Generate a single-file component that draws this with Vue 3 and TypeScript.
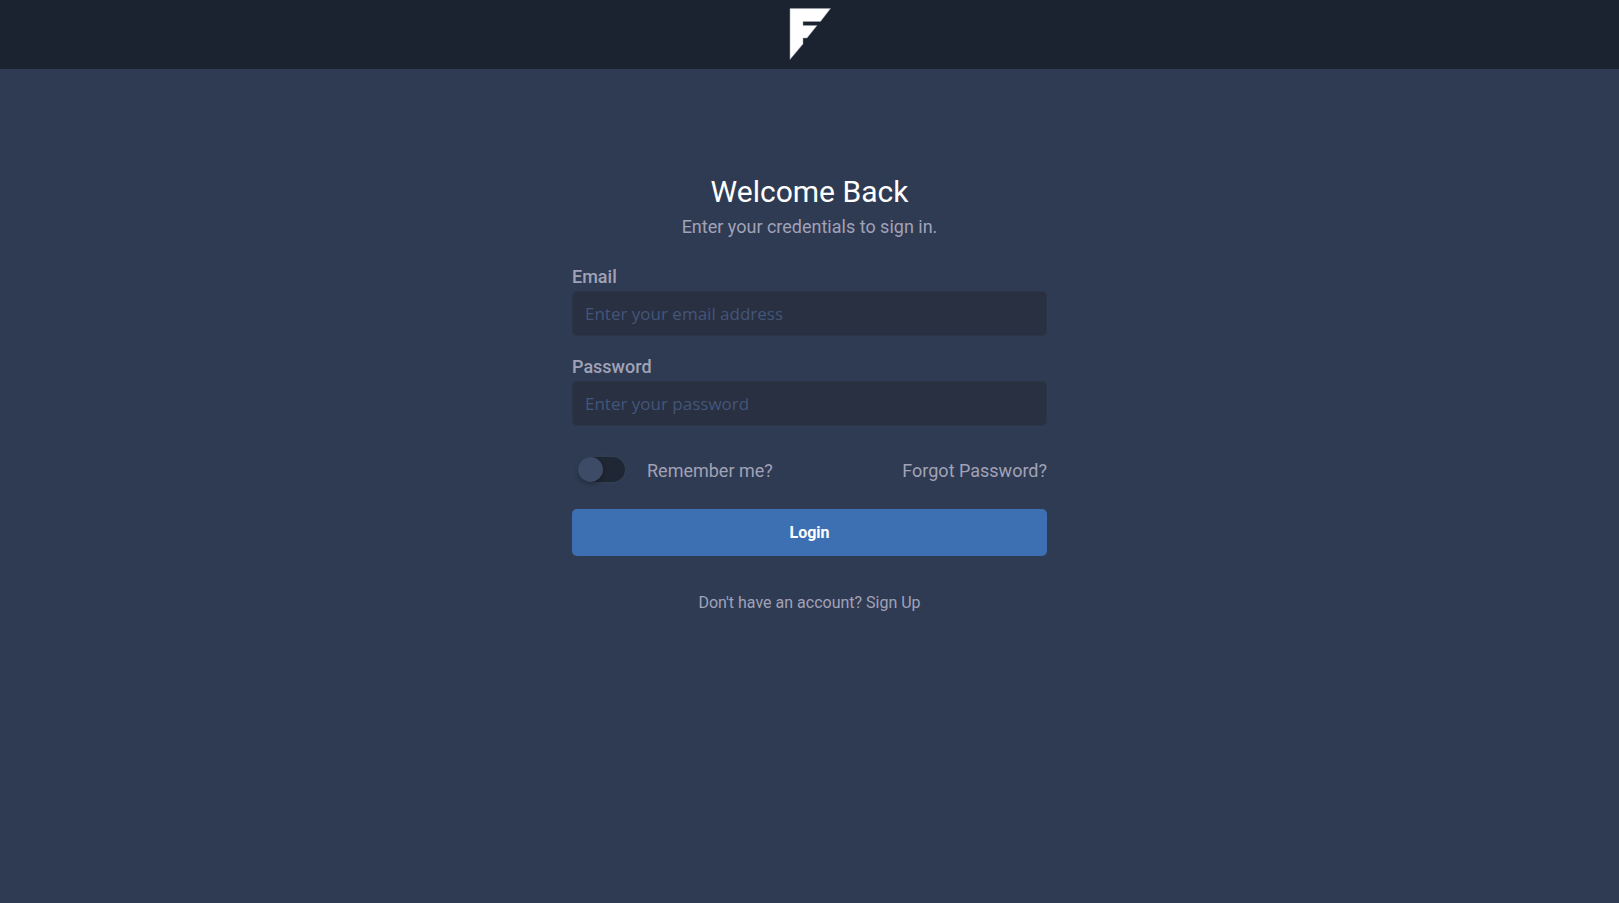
<script setup lang="ts">
import { ref } from 'vue'

const email = ref<string>('')
const password = ref<string>('')
const remember = ref<boolean>(false)
</script>

<template>
  <div class="page">
    <header class="topbar">
      <a class="brand" href="#" aria-label="Home">
        <svg width="42" height="52" viewBox="0 0 42 52" aria-hidden="true">
          <path
            d="M1 0.5H41.500L31.500 13.500H14V17.500H28L18 30H14V36L1 51.500Z"
            fill="#ffffff"
            stroke="#9da2ac"
            stroke-width="0.5"
          />
        </svg>
      </a>
    </header>

    <main class="content">
      <form class="login" @submit.prevent>
        <h1 class="title">Welcome Back</h1>
        <p class="subtitle">Enter your credentials to sign in.</p>

        <div class="field">
          <label for="email">Email</label>
          <input id="email" v-model="email" type="email" placeholder="Enter your email address" />
        </div>
        <div class="field">
          <label for="password">Password</label>
          <input id="password" v-model="password" type="password" placeholder="Enter your password" />
        </div>

        <div class="options">
          <label class="remember" for="remember">
            <input id="remember" v-model="remember" class="switch" type="checkbox" />
            <span>Remember me?</span>
          </label>
          <a href="#">Forgot Password?</a>
        </div>

        <button class="submit" type="submit">Login</button>

        <p class="signup"><a href="#">Don't have an account? Sign Up</a></p>
      </form>
    </main>
  </div>
</template>

<style>
body {
  margin: 0;
  background: #2f3b52;
}
</style>

<style scoped>
.page {
  min-height: 100vh;
  background: #2f3b52;
  color: #a1a2b8;
  font-family: Roboto, "Liberation Sans", sans-serif;
  font-size: 18px;
  line-height: 27px;
}

.page *,
.page *::before {
  box-sizing: border-box;
}

a {
  color: inherit;
  text-decoration: none;
}

.topbar {
  display: flex;
  justify-content: center;
  padding: 8px 0 9px;
  background: #1c2330;
}

.brand,
.brand svg {
  display: block;
}

.content {
  padding: 102px 16px 32px;
}

.login {
  width: 100%;
  max-width: 475px;
  margin: 0 auto;
}

.title {
  margin: 0;
  color: #ffffff;
  font-size: 30px;
  font-weight: 400;
  line-height: 42px;
  text-align: center;
}

.subtitle {
  margin: 0 0 23px;
  text-align: center;
}

.field {
  margin-bottom: 17px;
}

.field label {
  display: block;
  margin-bottom: 1px;
  font-weight: 500;
}

.field input {
  display: block;
  width: 100%;
  height: 45px;
  padding: 0 12px;
  border: 1px solid #2b3548;
  border-radius: 5px;
  background: #293042;
  color: #a1a2b8;
  font-family: "Open Sans", "Noto Sans", sans-serif;
  font-size: 17px;
}

.field input::placeholder {
  color: #435679;
  opacity: 1;
}

.options {
  display: flex;
  align-items: flex-start;
  justify-content: space-between;
  margin: 29px 0 22px;
  line-height: 32px;
}

.remember {
  display: flex;
  align-items: flex-start;
  gap: 20px;
}

.switch {
  appearance: none;
  width: 51px;
  height: 29px;
  margin: 0 0 0 4px;
  border: 2px solid #303e54;
  border-radius: 15px;
  background: #202734;
}

.switch::before {
  content: "";
  display: block;
  width: 25px;
  height: 25px;
  border-radius: 50%;
  background: #3d4b66;
  box-shadow: 0 2px 4px rgba(0, 0, 0, 0.3);
}

.switch:checked::before {
  margin-left: auto;
  background: #3d70b2;
}

.submit {
  display: block;
  width: 100%;
  height: 47px;
  padding: 0;
  border: 0;
  border-radius: 5px;
  background: #3d70b2;
  color: #ffffff;
  font-family: inherit;
  font-size: 16px;
  font-weight: 700;
}

.signup {
  margin: 35px 0 0;
  font-size: 16px;
  line-height: 24px;
  text-align: center;
}
</style>
